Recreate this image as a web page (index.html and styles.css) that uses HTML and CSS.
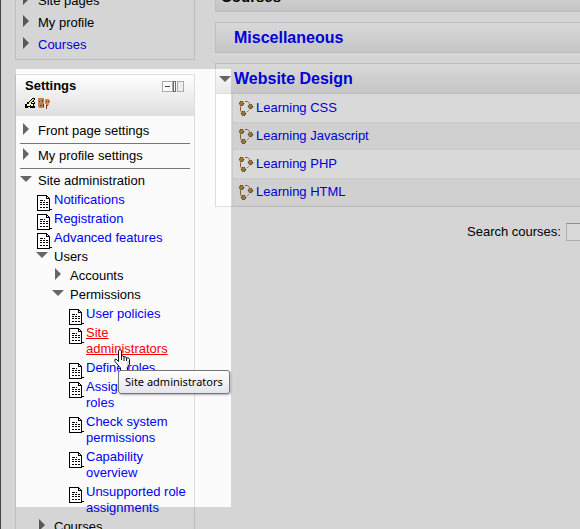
FILE: index.html
```html
<!DOCTYPE html>
<html lang="en">
<head>
<meta charset="utf-8">
<title>Courses</title>
<link rel="stylesheet" href="styles.css">
</head>
<body>
<svg class="defs" aria-hidden="true">
  <symbol id="closed" viewBox="0 0 12 12"><path d="M3 0L9 6L3 12z" fill="#666"/></symbol>
  <symbol id="open" viewBox="0 0 12 12"><path d="M0 3H12L6 9z" fill="#666"/></symbol>
  <symbol id="doc" viewBox="0 0 15 16">
    <path d="M1 1H9L12 4V15H1z" fill="#fff"/>
    <g fill="#000">
      <rect x="0" y="0" width="10" height="1"/><rect x="0" y="0" width="1" height="16"/><rect x="0" y="15" width="13" height="1"/><rect x="12" y="3" width="1" height="12"/>
      <rect x="9" y="1" width="1" height="3"/><rect x="9" y="3" width="4" height="1"/><rect x="10" y="1" width="1" height="1"/><rect x="11" y="2" width="1" height="1"/><rect x="13" y="14" width="2" height="1"/>
      <rect x="3" y="5" width="3" height="1"/><rect x="7" y="5" width="1" height="1"/>
      <rect x="3" y="7" width="2" height="1"/><rect x="6" y="7" width="2" height="1"/><rect x="9" y="7" width="2" height="1"/>
      <rect x="3" y="9" width="2" height="1"/><rect x="6" y="9" width="2" height="1"/><rect x="9" y="9" width="2" height="1"/>
      <rect x="3" y="12" width="2" height="1"/><rect x="6" y="12" width="2" height="1"/><rect x="9" y="12" width="2" height="1"/>
    </g>
  </symbol>
  <symbol id="course" viewBox="0 0 15 16">
    <path d="M6 1.500H8.500L10.500 3.500M1.500 6.500V10.500L2.500 12" fill="none" stroke="#a5652a"/>
    <path d="M8 12L10 10" fill="none" stroke="#a5652a" stroke-width=".7"/>
    <g fill="#b58a38"><circle cx="2.500" cy="3.500" r="2.200"/><circle cx="11.500" cy="6.500" r="2.200"/><circle cx="4.500" cy="13.500" r="2.200"/></g>
    <g fill="none" stroke="#1c1408" stroke-dasharray="1 1"><circle cx="2.500" cy="3.500" r="2.200"/><circle cx="11.500" cy="6.500" r="2.200"/><circle cx="4.500" cy="13.500" r="2.200"/></g>
  </symbol>
</svg>
<div class="page">
  <aside class="side">
    <section class="block nav">
      <ul class="tree">
        <li><button class="node"><svg class="arrow"><use href="#closed"/></svg>Site pages</button></li>
        <li><button class="node"><svg class="arrow"><use href="#closed"/></svg>My profile</button></li>
        <li><a class="node" href="#courses"><svg class="arrow"><use href="#closed"/></svg>Courses</a></li>
      </ul>
    </section>
    <section class="block settings">
      <header class="block-head">
        <div class="block-title">
          <h2>Settings</h2>
          <button class="dock" aria-label="Hide or dock Settings block"><svg width="22" height="11" viewBox="0 0 22 11"><rect width="11" height="11" fill="#aaa"/><rect x="1" y="1" width="9" height="9" fill="#fff"/><rect x="3" y="5" width="5" height="1" fill="#444"/><rect x="11" width="3" height="11" fill="#0a84f0"/><rect x="12" y="1" width="1" height="9" fill="#fff"/><rect x="15" width="7" height="11" fill="#aaa"/><rect x="16" y="1" width="5" height="9" fill="#eee"/></svg></button>
        </div>
        <div class="tools">
          <button class="tool" aria-label="Edit"><svg width="11" height="11" viewBox="0 0 11 11"><path d="M0 6H2V4H4V3H5V2H6V1H7V0H10V2H9V4H10V6H9V8H10V10H5V9H3V10H0z" fill="#000"/><path d="M4 4H5V3H6V2H7V1H9V2H8V3H7V4H6V5H4z" fill="#ffe34d"/><path d="M2 6H4V5H6V6H8V8H6V7H5V8H2zM7 4H9V5H7z" fill="#fff"/></svg></button>
          <button class="tool" aria-label="Assign roles"><svg width="12" height="11" viewBox="0 0 12 11"><path d="M0 0H6V10H1V9H0z" fill="#bd8354"/><path d="M1 3H2V4H1zM4 2H5V4H4zM2 7H4V8H2zM5 6H6V9H5z" fill="#5a3a26"/><path d="M7 1H11V2H12V5H11V7H8V6H7z" fill="#e08344"/><path d="M8 3H9V4H8zM10 3H11V4H10zM8 7H10V8H9V11H8z" fill="#744120"/></svg></button>
        </div>
      </header>
      <ul class="tree ruled">
        <li><button class="node"><svg class="arrow"><use href="#closed"/></svg>Front page settings</button></li>
        <li><button class="node"><svg class="arrow"><use href="#closed"/></svg>My profile settings</button></li>
        <li><button class="node"><svg class="arrow"><use href="#open"/></svg>Site administration</button>
          <ul>
            <li><a class="node" href="#notifications"><svg class="doc"><use href="#doc"/></svg>Notifications</a></li>
            <li><a class="node" href="#registration"><svg class="doc"><use href="#doc"/></svg>Registration</a></li>
            <li><a class="node" href="#advanced"><svg class="doc"><use href="#doc"/></svg>Advanced features</a></li>
            <li><button class="node"><svg class="arrow"><use href="#open"/></svg>Users</button>
              <ul>
                <li><button class="node"><svg class="arrow"><use href="#closed"/></svg>Accounts</button></li>
                <li><button class="node"><svg class="arrow"><use href="#open"/></svg>Permissions</button>
                  <ul>
                    <li><a class="node" href="#policies"><svg class="doc"><use href="#doc"/></svg>User policies</a></li>
                    <li><a class="node current" href="#admins"><svg class="doc"><use href="#doc"/></svg>Site administrators</a></li>
                    <li><a class="node" href="#define"><svg class="doc"><use href="#doc"/></svg>Define roles</a></li>
                    <li><a class="node" href="#assign"><svg class="doc"><use href="#doc"/></svg>Assign system roles</a></li>
                    <li><a class="node" href="#check"><svg class="doc"><use href="#doc"/></svg>Check system permissions</a></li>
                    <li><a class="node" href="#capability"><svg class="doc"><use href="#doc"/></svg>Capability overview</a></li>
                    <li><a class="node" href="#unsupported"><svg class="doc"><use href="#doc"/></svg>Unsupported role assignments</a></li>
                  </ul>
                </li>
              </ul>
            </li>
            <li><button class="node"><svg class="arrow"><use href="#closed"/></svg>Courses</button></li>
          </ul>
        </li>
      </ul>
    </section>
  </aside>
  <main class="main">
    <h1 class="bar title">Courses</h1>
    <section class="category"><h2 class="bar"><a href="#misc">Miscellaneous</a></h2></section>
    <section class="category">
      <h2 class="bar"><svg class="arrow"><use href="#open"/></svg><a href="#web">Website Design</a></h2>
      <ul class="courses">
        <li><a href="#css"><svg class="doc"><use href="#course"/></svg>Learning CSS</a></li>
        <li><a href="#js"><svg class="doc"><use href="#course"/></svg>Learning Javascript</a></li>
        <li><a href="#php"><svg class="doc"><use href="#course"/></svg>Learning PHP</a></li>
        <li><a href="#html"><svg class="doc"><use href="#course"/></svg>Learning HTML</a></li>
      </ul>
    </section>
    <form class="search"><label for="q">Search courses:</label><input id="q" type="text"></form>
  </main>
  <div class="spotlight"></div>
  <svg class="pointer" viewBox="0 0 17 22" aria-hidden="true"><path d="M4.500 1.500Q6 -.5 7.500 1.500V7Q9 6 10 8Q12 7 12.500 9Q15 8 15.500 10.500V15L13.500 18V21.500H6.500V19L1 12.500Q0 10 2 10L4.500 12.500z" fill="#fff" stroke="#111"/><path d="M7.500 7V11M10 8V12M12.500 9V12" stroke="#111" fill="none"/><path d="M14 12V16L12 20" stroke="#bbb" fill="none"/></svg>
  <div class="tooltip" role="tooltip">Site administrators</div>
</div>
</body>
</html>
```
FILE: styles.css
```css
* { box-sizing: border-box; }

body {
  margin: 0;
  font: 13px/16px "Liberation Sans", Arial, sans-serif;
  color: #000;
  background: #fbfbfb;
}

.defs { position: absolute; width: 0; height: 0; }
h1, h2, ul { margin: 0; padding: 0; }
ul { list-style: none; }
a { color: #00f; text-decoration: none; }
svg { flex: none; }

button {
  padding: 0;
  border: 0;
  background: none;
  font: inherit;
  color: inherit;
  text-align: left;
}

.page {
  position: relative;
  display: flex;
  gap: 20px;
  height: 100vh;
  padding-left: 14px;
  border-left: 1px solid #444;
  overflow: hidden;
}

.side { flex: 0 0 180px; }
.block { border: 1px solid #dedede; }

.nav {
  margin-top: -11px;
  margin-bottom: 14px;
  padding: 3px 4px 6px;
}
.nav li + li { margin-top: 6px; }

.block-head {
  height: 41px;
  padding: 3px 10px 0 9px;
  background: linear-gradient(#fff, #dedede);
}
.block-title {
  display: flex;
  align-items: center;
  justify-content: space-between;
}
.block-title h2 { font-size: 13px; }
.dock svg, .tool svg { display: block; }
.tools { display: flex; gap: 2px; margin-top: 4px; }

.ruled { padding: 2px 4px; }
.ruled > li { padding-top: 4px; }
.ruled > li:not(:last-child) {
  padding-bottom: 4px;
  border-bottom: 1px solid #777;
}
.ruled > li:first-child { padding-top: 5px; }
.tree ul { padding-left: 16px; }
.tree ul li { padding-top: 3px; }
.node { display: flex; align-items: flex-start; }
.arrow { width: 12px; height: 12px; margin-right: 6px; }
.doc { width: 15px; height: 16px; margin: 3px 2px -3px 1px; }
.current { color: #f00; text-decoration: underline; }

.main { flex: 1 0 auto; margin-right: -20px; }
.bar {
  display: flex;
  align-items: center;
  height: 31px;
  padding-left: 3px;
  border: 1px solid #dedede;
  background: linear-gradient(#fff, #e8e8e8);
  font-size: 16px;
}
.bar a:first-child { margin-left: 15px; }
.bar .arrow { margin-right: 3px; }
.title { margin-top: -19px; padding-left: 5px; font-size: 15px; }
.category { margin-top: 10px; }
.courses {
  padding-left: 16px;
  border: solid #dedede;
  border-width: 0 0 1px 1px;
  background: #fff;
}
.courses li { padding: 6px; border-left: 1px solid #eee; }
.courses li:nth-child(even) {
  padding: 5px 6px;
  border-top: 1px solid #eee;
  border-bottom: 1px solid #eee;
  background: #f5f5f5;
}
.courses a { display: flex; }
.courses .doc { margin: 0 2px 0 0; }

.search {
  display: flex;
  align-items: center;
  gap: 5px;
  margin-top: 16px;
  padding-left: 252px;
}
.search input {
  width: 120px;
  height: 18px;
  margin: 0;
  border: 1px solid #ccc;
  border-top-color: #aaa;
  background: #fff;
}

.spotlight {
  position: absolute;
  left: 15px;
  top: 69px;
  width: 215px;
  height: 438px;
  box-shadow: 0 0 0 1000px rgba(0, 0, 0, .15);
  pointer-events: none;
}

.pointer {
  position: absolute;
  left: 113px;
  top: 349px;
  width: 17px;
  height: 22px;
}

.tooltip {
  position: absolute;
  left: 117px;
  top: 370px;
  padding: 3px 6px;
  border: 1px solid #767676;
  border-radius: 3px;
  background: linear-gradient(#fff, #e4e5f0);
  box-shadow: 1px 1px 2px rgba(0, 0, 0, .3);
  font: 11px/16px "Noto Sans", sans-serif;
  white-space: nowrap;
}
```
